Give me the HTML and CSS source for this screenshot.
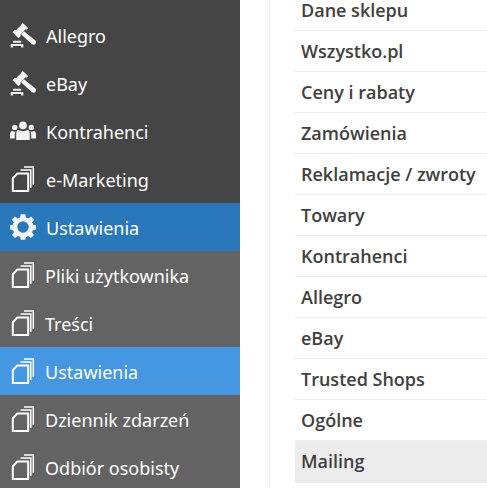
FILE: index.html
```html
<!DOCTYPE html>
<html lang="pl">
<head>
<meta charset="utf-8">
<title>Ustawienia</title>
<link rel="stylesheet" href="styles.css">
</head>
<body>
<svg class="defs" width="0" height="0" aria-hidden="true">
  <symbol id="i-gavel" viewBox="0 0 26 26">
    <path fill="currentColor" d="M12.700 .8 18.300 6.200 16.700 7.800 15.900 7.100 10.100 12.900 10.900 13.700 8.500 16.200 2.500 10 4.900 7.700 5.700 8.400 11.500 2.700 11.200 2.300Z"/>
    <path fill="currentColor" d="M14 9.200 25.400 18.400C26.400 19.500 26.300 21 25.300 22 24.300 23 22.800 23 21.700 22.100L11 12.200Z"/>
    <path fill="currentColor" d="M3 18.700H11.200V20.700H3ZM.7 22H13.300V25.400H11V24H3V25.400H.7Z"/>
  </symbol>
  <symbol id="i-users" viewBox="0 0 26 26">
    <circle fill="currentColor" cx="13" cy="7.400" r="3.800"/>
    <circle fill="currentColor" cx="4.700" cy="9.400" r="2.700"/>
    <circle fill="currentColor" cx="21.300" cy="9.400" r="2.700"/>
    <path fill="currentColor" d="M8.600 11.800C10 12.800 11.400 13.200 13 13.200 14.600 13.200 16 12.800 17.400 11.800 19.400 12 19.800 14 19.800 17V22H6.200V17C6.200 14 6.600 12 8.600 11.800Z"/>
    <path fill="currentColor" d="M2 13C3 13.600 4 13.800 5.600 13.600 4.900 15 4.800 16.400 4.800 20.400H0V17C0 14.800.6 13.400 2 13ZM24 13C23 13.600 22 13.800 20.400 13.600 21.100 15 21.200 16.400 21.200 20.400H26V17C26 14.800 25.400 13.400 24 13Z"/>
  </symbol>
  <symbol id="i-gear" viewBox="0 0 26 26">
    <path fill="currentColor" fill-rule="evenodd" d="M10.700.2H15.300L15.900 3.500A9.400 9.400 0 0 1 18.300 4.500L21.200 2.400 24.300 5.500 22.200 8.400A9.400 9.400 0 0 1 23.100 10.700L26 11.300V15.500L22.900 15.900A9.400 9.400 0 0 1 22 18.200L24 21.100 21 24.100 18.100 22.100A9.400 9.400 0 0 1 15.800 23L15.300 25.800H10.700L10.200 23A9.400 9.400 0 0 1 7.900 22.100L5 24.100 2 21.100 4 18.200A9.400 9.400 0 0 1 3.100 15.900L0 15.500V11.300L2.900 10.700A9.400 9.400 0 0 1 3.800 8.400L1.700 5.500 4.800 2.400 7.700 4.500A9.400 9.400 0 0 1 10.100 3.500ZM13 7.300A5.700 5.700 0 1 0 13 18.700 5.700 5.700 0 0 0 13 7.300Z"/>
  </symbol>
  <symbol id="i-pages" viewBox="0 0 26 26">
    <path fill="none" stroke="#fff" stroke-width="2" stroke-linejoin="round" d="M7.500 7.400H18.200V25H2.800V12.200Z"/>
    <path fill="none" stroke="#fff" stroke-width="1.500" d="M10.500 3.900H20.800V22"/>
    <path fill="none" stroke="#fff" stroke-width="1.500" d="M14 1H23.300V19"/>
  </symbol>
</svg>
<div class="page">
  <nav class="sidebar">
    <a class="nav-item"><svg class="icon"><use href="#i-gavel"/></svg><span>Allegro</span></a>
    <a class="nav-item"><svg class="icon"><use href="#i-gavel"/></svg><span>eBay</span></a>
    <a class="nav-item"><svg class="icon"><use href="#i-users"/></svg><span>Kontrahenci</span></a>
    <a class="nav-item"><svg class="icon"><use href="#i-pages"/></svg><span>e-Marketing</span></a>
    <a class="nav-item parent-active"><svg class="icon"><use href="#i-gear"/></svg><span>Ustawienia</span></a>
    <a class="nav-item sub"><svg class="icon"><use href="#i-pages"/></svg><span>Pliki użytkownika</span></a>
    <a class="nav-item sub"><svg class="icon"><use href="#i-pages"/></svg><span>Treści</span></a>
    <a class="nav-item sub sub-active"><svg class="icon"><use href="#i-pages"/></svg><span>Ustawienia</span></a>
    <a class="nav-item sub"><svg class="icon"><use href="#i-pages"/></svg><span>Dziennik zdarzeń</span></a>
    <a class="nav-item sub"><svg class="icon"><use href="#i-pages"/></svg><span>Odbiór osobisty</span></a>
  </nav>
  <div class="gutter"></div>
  <main class="content">
    <ul class="menu">
      <li class="menu-item first">Dane sklepu</li>
      <li class="menu-item">Wszystko.pl</li>
      <li class="menu-item">Ceny i rabaty</li>
      <li class="menu-item">Zamówienia</li>
      <li class="menu-item">Reklamacje / zwroty</li>
      <li class="menu-item">Towary</li>
      <li class="menu-item">Kontrahenci</li>
      <li class="menu-item">Allegro</li>
      <li class="menu-item">eBay</li>
      <li class="menu-item">Trusted Shops</li>
      <li class="menu-item">Ogólne</li>
      <li class="menu-item active">Mailing</li>
    </ul>
  </main>
</div>
</body>
</html>
```
FILE: styles.css
```css
* { box-sizing: border-box; }
html, body { margin: 0; height: 100%; overflow: hidden; background: #fff; }
.defs { position: absolute; }
.page { display: flex; height: 488px; }
.sidebar {
  width: 240px;
  flex: none;
  padding-top: 11px;
  background: #454545;
  font-family: "Noto Sans", "Open Sans", sans-serif;
  font-size: 18px;
  color: #fff;
  overflow: hidden;
}
.nav-item { display: flex; align-items: center; gap: 10px; height: 48px; padding-left: 10px; background: #454545; }
.nav-item span { padding-top: 2px; }
.nav-item .icon { width: 26px; height: 26px; flex: none; color: #f4f4f4; }
.nav-item.parent-active { background: #2a78bc; }
.nav-item.sub { background: #636363; gap: 9px; }
.nav-item.sub-active { background: #4497e0; }
.gutter { width: 30px; flex: none; }
.gutter::after { content: ""; display: block; width: 1px; height: 100%; margin-left: 29px; background: #eeeeee; }
.content { flex: 1; padding-left: 25px; overflow: hidden; }
.menu { list-style: none; margin: 0; padding: 0; font-family: "Open Sans", sans-serif; font-weight: 600; font-size: 18px; line-height: 20px; color: #404040; }
.menu-item { display: flex; align-items: center; height: 41px; padding-left: 6px; border-bottom: 1px solid #eeeeee; }
.menu-item.first { height: 31px; align-items: flex-start; }
.menu-item.active { height: 42px; padding-bottom: 2px; background: #ececec; border-bottom: 0; }
```
